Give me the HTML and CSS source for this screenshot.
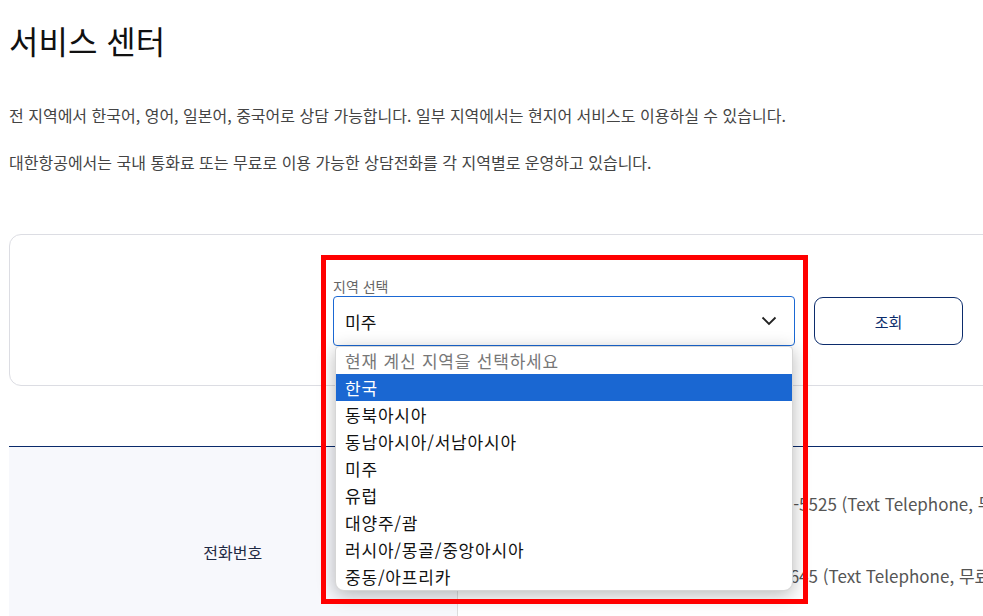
FILE: index.html
```html
<!DOCTYPE html>
<html lang="ko">
<head>
    <meta charset="UTF-8">
    <meta name="viewport" content="width=device-width, initial-scale=1.0">
    <title>서비스 센터</title>
    <link rel="stylesheet" href="styles.css">
</head>
<body>
    <div class="page">
        <h1 class="title">서비스 센터</h1>
        <p class="desc">전 지역에서 한국어, 영어, 일본어, 중국어로 상담 가능합니다. 일부 지역에서는 현지어 서비스도 이용하실 수 있습니다.</p>
        <p class="desc">대한항공에서는 국내 통화료 또는 무료로 이용 가능한 상담전화를 각 지역별로 운영하고 있습니다.</p>

        <div class="search-card">
            <div class="field">
                <label class="field-label">지역 선택</label>
                <div class="select-wrap">
                    <div class="select">
                        <span>미주</span>
                        <svg class="chevron" width="16" height="10" viewBox="0 0 16 10"><polyline points="1.5,1.5 8,8 14.5,1.5" fill="none" stroke="#222" stroke-width="1.8"/></svg>
                    </div>
                    <ul class="dropdown">
                        <li class="placeholder">현재 계신 지역을 선택하세요</li>
                        <li class="active">한국</li>
                        <li>동북아시아</li>
                        <li>동남아시아/서남아시아</li>
                        <li>미주</li>
                        <li>유럽</li>
                        <li>대양주/괌</li>
                        <li>러시아/몽골/중앙아시아</li>
                        <li>중동/아프리카</li>
                    </ul>
                </div>
            </div>
            <button class="btn-search">조회</button>
            <div class="mark-box"></div>
        </div>

        <table class="info-table">
            <tr>
                <th>전화번호</th>
                <td>
                    <p class="tel">1588-2001 / 1800-3-5525 (Text Telephone, 무료)</p>
                    <p class="tel">1588-2001 / 02-2-3645 (Text Telephone, 무료)</p>
                </td>
            </tr>
        </table>
    </div>
</body>
</html>
```

FILE: styles.css
```css
* {
    box-sizing: border-box;
}

body {
    margin: 0;
    padding: 0;
    background-color: #fff;
    font-family: "Noto Sans CJK KR", "Noto Sans", sans-serif;
    color: #222;
    overflow: hidden;
}

.page {
    position: relative;
    width: 1278px;
    margin-left: 9px;
    padding-top: 18px;
}

.title {
    margin: 0 0 40px 0;
    font-size: 32px;
    line-height: 45px;
    font-weight: 400;
    color: #111;
}

.desc {
    margin: 0 0 23px 0;
    font-size: 16px;
    line-height: 24px;
    color: #444;
}

.search-card {
    position: relative;
    margin-top: 60px;
    border: 1px solid #dcdde3;
    border-radius: 12px;
    padding: 42px 0 39px 0;
    display: flex;
    justify-content: center;
    align-items: flex-end;
    gap: 19px;
}

.field {
    width: 462px;
}

.field-label {
    display: block;
    font-size: 14px;
    line-height: 18px;
    color: #666;
    margin-bottom: 1px;
}

.select-wrap {
    position: relative;
}

.select {
    height: 50px;
    border: 1px solid #1b68d3;
    border-radius: 4px;
    padding: 0 16px 0 11px;
    display: flex;
    align-items: center;
    justify-content: space-between;
    font-size: 17px;
    color: #111;
}

.chevron {
    margin-right: 1px;
}

.dropdown {
    position: absolute;
    top: 100%;
    left: 2px;
    width: 458px;
    margin: 0;
    padding: 0;
    list-style: none;
    background-color: #fff;
    border: 1px solid #d6d6d6;
    border-radius: 4px 4px 9px 9px;
    box-shadow: 0 4px 18px rgba(0, 0, 0, 0.28);
    overflow: hidden;
    z-index: 5;
}

.dropdown li {
    height: 27px;
    line-height: 27px;
    padding-left: 9px;
    font-size: 17px;
    letter-spacing: 0.8px;
    color: #111;
}

.dropdown .placeholder {
    color: #777;
}

.dropdown .active {
    background-color: #1a67d2;
    color: #fff;
}

.btn-search {
    width: 149px;
    height: 48px;
    margin-bottom: 1px;
    border: 1px solid #0c2c6c;
    border-radius: 9px;
    background-color: #fff;
    font-family: inherit;
    font-size: 15px;
    color: #0c2c6c;
}

/* annotation frame over the open list */
.mark-box {
    position: absolute;
    left: 311px;
    top: 20px;
    width: 487px;
    height: 349px;
    border: 5px solid #ff0000;
    z-index: 6;
}

.info-table {
    width: 100%;
    margin-top: 60px;
    border-collapse: collapse;
    border-top: 1px solid #0a2a6b;
}

.info-table th {
    width: 448px;
    height: 210px;
    background-color: #f7f8fc;
    border-right: 1px solid #dddddd;
    font-size: 16px;
    font-weight: 400;
    color: #1f2a44;
}

.info-table td {
    vertical-align: top;
    padding: 43px 0 0 185px;
}

.tel {
    margin: 0 0 44px 0;
    font-size: 17px;
    line-height: 28px;
    color: #555;
    white-space: nowrap;
}
```
